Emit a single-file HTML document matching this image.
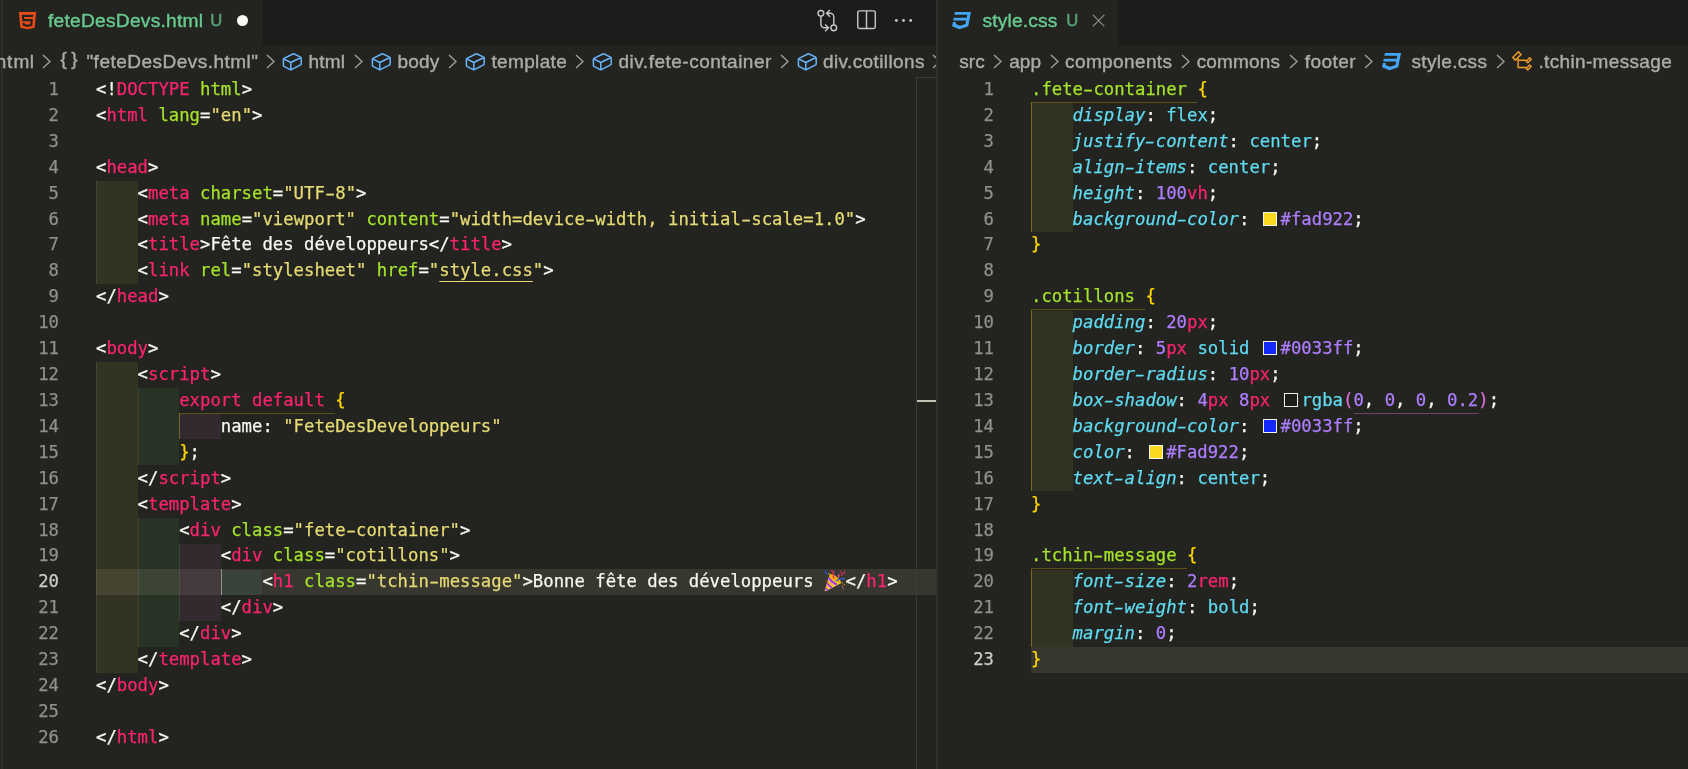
<!DOCTYPE html>
<html lang="fr">
<head>
<meta charset="UTF-8">
<title>feteDesDevs.html — style.css</title>
<style>
html,body{margin:0;padding:0;}
body{width:1688px;height:769px;overflow:hidden;background:#23241f;position:relative;font-family:"Liberation Sans",sans-serif;color:#f8f8f2;}
#root{position:absolute;left:0;top:0;width:1688px;height:769px;will-change:transform;}
.abs{position:absolute;}
#stripe{left:0;top:0;width:3.1px;height:769px;background:#2e2f2a;border-left:1.1px solid #22231f;box-sizing:border-box;}
.tabbar{top:0;height:45.8px;background:#1c1d1a;}
.tab{top:0;height:45.8px;background:#23241f;}
.tl{position:absolute;white-space:pre;font-size:19.2px;line-height:24px;color:#69ca90;-webkit-text-stroke:.4px #69ca90;}
.bc{position:absolute;white-space:pre;font-size:19px;line-height:24px;color:#ababa7;top:49.6px;-webkit-text-stroke:.4px #ababa7;}
.chev{position:absolute;top:54.2px;width:9px;height:15px;}
.cube{position:absolute;top:51.5px;width:21px;height:20px;}
.ln{-webkit-text-stroke:.25px;position:absolute;width:60px;text-align:right;font:17.28px/25.92px "DejaVu Sans Mono","Liberation Mono",monospace;color:#90908a;}
.ln.act{color:#cfcfc8;}
.cl{letter-spacing:.004px;-webkit-text-stroke:.25px;position:absolute;white-space:pre;font:17.28px/25.92px "DejaVu Sans Mono","Liberation Mono",monospace;color:#f8f8f2;height:25.92px;}
.ib{position:absolute;width:41.6px;height:25.92px;}
.w{color:#f8f8f2}.p{color:#fb2370}.g{color:#a6e42c}.y{color:#e6db74}.n{color:#ae7eff}
.k{color:#5fdbf2}.c{color:#5fdbf2;font-style:italic}.b1{color:#ffd700}.b2{color:#da70d6}
.hy{display:inline-block;transform:scaleX(1.62);}
.ul{text-decoration:underline;text-underline-offset:5.1px;text-decoration-thickness:1.3px;text-decoration-skip-ink:none}
.ulg{box-shadow:0 4.6px 0 -3.2px rgba(218,112,214,.55);}
.sw{display:inline-block;box-sizing:border-box;width:13.82px;height:13.82px;margin:0 3.46px 0 3.46px;border:1.6px solid #f2f2ee;vertical-align:-1.2px;}
.swd{border-color:#eeeeee;}
.emo{display:inline-block;width:21.5px;height:1px;}
.emsvg{position:absolute;left:561.3px;top:.45px;}
.emt{position:absolute;left:565px;top:0;font-size:1px;line-height:1px;opacity:0;}
.hl{position:absolute;height:25.92px;background:#37362f;}
.gl{position:absolute;background:rgba(255,215,0,.26);}
.ig{position:absolute;width:1.3px;background:rgba(255,255,255,.09);}
</style>
</head>
<body>
<div id="root">
<!-- ===== left group chrome ===== -->
<div class="abs tabbar" style="left:0;width:936.5px"></div>
<div class="abs tab" style="left:2.4px;width:260.6px"></div>
<div class="abs tabbar" style="left:937.6px;width:751px"></div>
<div class="abs tab" style="left:937.6px;width:180.4px"></div>
<div class="abs" id="stripe"></div>
<div class="abs" style="left:936.4px;top:0;width:1.4px;height:769px;background:#2f302b"></div>

<!-- tab 1 -->
<svg class="abs" style="left:16px;top:8.6px" width="23.04" height="23.04" viewBox="0 0 32 32"><path fill="#e94b19" d="m4 4 2 22 10 2 10-2 2-22Zm19.720 7H11.280l.290 3h11.860l-.802 9.335L15.990 25l-6.635-1.646L8.930 19h3.020l.190 2 3.860.770 3.840-.770.290-4H8.840L8 8h16Z"/></svg>
<div class="tl" style="left:48px;top:9.2px;letter-spacing:.24px">feteDesDevs.html</div>
<div class="tl" style="left:210.2px;top:9.1px;opacity:.75;font-size:16.6px;-webkit-text-stroke-width:.55px">U</div>
<div class="abs" style="left:236.7px;top:14.7px;width:11.5px;height:11.5px;border-radius:50%;background:#f8f8f2"></div>

<!-- left actions -->
<svg class="abs" style="left:816.3px;top:9.3px" width="23.04" height="23.04" viewBox="0 0 16 16" fill="none" stroke="#c5c5c5" stroke-width="1"><circle cx="3.400" cy="3" r="2"/><circle cx="12.350" cy="13.050" r="2"/><path d="M3.400 5v5.550a2.500 2.500 0 0 0 2.500 2.500h2.500M6.300 10.700l2.400 2.350-2.400 2.350"/><path d="M12.350 11.050V5.500a2.500 2.500 0 0 0-2.500-2.500H7.600M9.700.650 7.300 3l2.400 2.350"/></svg>
<svg class="abs" style="left:854.7px;top:7.9px" width="23.04" height="23.04" viewBox="0 0 16 16" fill="none" stroke="#c5c5c5" stroke-width="1"><rect x="1.900" y="2" width="12.200" height="12.200" rx="1.200"/><path d="M8 2v12.200"/></svg>
<svg class="abs" style="left:891.5px;top:9.1px" width="23.04" height="23.04" viewBox="0 0 16 16" fill="#c5c5c5"><circle cx="3" cy="8" r="1"/><circle cx="8" cy="8" r="1"/><circle cx="13" cy="8" r="1"/></svg>

<!-- tab 2 -->
<svg class="abs" style="left:949.8px;top:8.6px" width="23.04" height="23.04" viewBox="0 0 32 32"><path fill="#42a5f5" d="m29.180 4-3.570 18.360-.330 1.640-4.740 1.570-3.280 1.090L13.210 28 2.870 24.050 4.050 18h4.200l-.440 2.850 6.340 2.420.780-.260 6.520-2.160.170-.830.790-4.020H4.440l.740-3.760.050-.240h17.960l.780-4H6l.780-4z"/></svg>
<div class="tl" style="left:982.4px;top:9.2px;letter-spacing:.18px">style.css</div>
<div class="tl" style="left:1066.2px;top:9.1px;opacity:.75;font-size:16.6px;-webkit-text-stroke-width:.55px">U</div>
<svg class="abs" style="left:1091.5px;top:14.2px" width="13.2" height="13.2" viewBox="0 0 12 12" fill="none" stroke="#8f908a" stroke-width="1.100"><path d="M.8.800l10.400 10.400M11.200.800.800 11.200"/></svg>

<!-- breadcrumbs left -->
<div class="bc" style="left:-4.2px;letter-spacing:.5px">h<span style="letter-spacing:1.2px">t</span>ml</div>
<svg class="chev" style="left:41.8px" viewBox="0 0 9 15" fill="none" stroke="#a3a39f" stroke-width="1.300"><path d="M1 1l7 6.500-7 6.500"/></svg>
<div class="bc" style="left:60.6px;top:47.4px;letter-spacing:4.4px;font-size:18.72px">{}</div>
<div class="bc" style="left:86.4px;letter-spacing:0.484px">&quot;feteDesDevs.html&quot;</div>
<svg class="chev" style="left:265.7px" viewBox="0 0 9 15" fill="none" stroke="#a3a39f" stroke-width="1.300"><path d="M1 1l7 6.500-7 6.500"/></svg>
<svg class="abs" style="left:281.00px;top:52px" width="23" height="20" viewBox="0 0 23 20" fill="none" stroke="#69b4fb" stroke-width="1.500" stroke-linejoin="round" stroke-linecap="round"><path d="M2.400 7.200Q2.400 6.600 3 6.300L11.800 2Q12.500 1.700 13.200 2L19.600 5.100Q20.200 5.400 20.200 6V11.900Q20.200 12.500 19.600 12.800L10.400 17.600Q9.800 17.900 9.200 17.600L3 14.300Q2.400 14 2.400 13.400ZM2.700 6.800L9.800 10.500L19.900 5.500M9.800 10.500V17.800"/></svg>
<div class="bc" style="left:308.4px;letter-spacing:0.258px">html</div>
<svg class="chev" style="left:354.0px" viewBox="0 0 9 15" fill="none" stroke="#a3a39f" stroke-width="1.300"><path d="M1 1l7 6.500-7 6.500"/></svg>
<svg class="abs" style="left:370.05px;top:52px" width="23" height="20" viewBox="0 0 23 20" fill="none" stroke="#69b4fb" stroke-width="1.500" stroke-linejoin="round" stroke-linecap="round"><path d="M2.400 7.200Q2.400 6.600 3 6.300L11.800 2Q12.500 1.700 13.200 2L19.600 5.100Q20.200 5.400 20.200 6V11.900Q20.200 12.500 19.600 12.800L10.400 17.600Q9.800 17.900 9.200 17.600L3 14.300Q2.400 14 2.400 13.400ZM2.700 6.800L9.800 10.500L19.900 5.500M9.800 10.500V17.800"/></svg>
<div class="bc" style="left:397.4px;letter-spacing:0.208px">body</div>
<svg class="chev" style="left:448.3px" viewBox="0 0 9 15" fill="none" stroke="#a3a39f" stroke-width="1.300"><path d="M1 1l7 6.500-7 6.500"/></svg>
<svg class="abs" style="left:464.15px;top:52px" width="23" height="20" viewBox="0 0 23 20" fill="none" stroke="#69b4fb" stroke-width="1.500" stroke-linejoin="round" stroke-linecap="round"><path d="M2.400 7.200Q2.400 6.600 3 6.300L11.800 2Q12.500 1.700 13.200 2L19.600 5.100Q20.200 5.400 20.200 6V11.900Q20.200 12.500 19.600 12.800L10.400 17.600Q9.800 17.900 9.200 17.600L3 14.300Q2.400 14 2.400 13.400ZM2.700 6.800L9.800 10.500L19.900 5.500M9.800 10.500V17.800"/></svg>
<div class="bc" style="left:491.4px;letter-spacing:0.360px">template</div>
<svg class="chev" style="left:575.2px" viewBox="0 0 9 15" fill="none" stroke="#a3a39f" stroke-width="1.300"><path d="M1 1l7 6.500-7 6.500"/></svg>
<svg class="abs" style="left:591.05px;top:52px" width="23" height="20" viewBox="0 0 23 20" fill="none" stroke="#69b4fb" stroke-width="1.500" stroke-linejoin="round" stroke-linecap="round"><path d="M2.400 7.200Q2.400 6.600 3 6.300L11.800 2Q12.500 1.700 13.200 2L19.600 5.100Q20.200 5.400 20.200 6V11.900Q20.200 12.500 19.600 12.800L10.400 17.600Q9.800 17.900 9.200 17.600L3 14.300Q2.400 14 2.400 13.400ZM2.700 6.800L9.800 10.500L19.900 5.500M9.800 10.500V17.800"/></svg>
<div class="bc" style="left:618.5px;letter-spacing:0.499px">div.fete-container</div>
<svg class="chev" style="left:779.9px" viewBox="0 0 9 15" fill="none" stroke="#a3a39f" stroke-width="1.300"><path d="M1 1l7 6.500-7 6.500"/></svg>
<svg class="abs" style="left:795.55px;top:52px" width="23" height="20" viewBox="0 0 23 20" fill="none" stroke="#69b4fb" stroke-width="1.500" stroke-linejoin="round" stroke-linecap="round"><path d="M2.400 7.200Q2.400 6.600 3 6.300L11.800 2Q12.500 1.700 13.200 2L19.600 5.100Q20.200 5.400 20.200 6V11.900Q20.200 12.500 19.600 12.800L10.400 17.600Q9.800 17.900 9.200 17.600L3 14.300Q2.400 14 2.400 13.400ZM2.700 6.800L9.800 10.500L19.900 5.500M9.800 10.500V17.800"/></svg>
<div class="bc" style="left:823.0px;letter-spacing:0.383px">div.cotillons</div>
<svg class="chev" style="left:932.3px" viewBox="0 0 9 15" fill="none" stroke="#a3a39f" stroke-width="1.300"><path d="M1 1l7 6.500-7 6.500"/></svg>
<div class="abs" style="left:936.4px;top:46px;width:1.3px;height:31.5px;background:#2f302b"></div>
<div class="abs" style="left:937.6px;top:46px;width:12px;height:31px;background:#23241f"></div>
<!-- breadcrumbs right -->
<div class="bc" style="left:959.3px;letter-spacing:0.029px">src</div>
<svg class="chev" style="left:993.0px" viewBox="0 0 9 15" fill="none" stroke="#a3a39f" stroke-width="1.300"><path d="M1 1l7 6.500-7 6.500"/></svg>
<div class="bc" style="left:1009.2px;letter-spacing:0.104px">app</div>
<svg class="chev" style="left:1049.5px" viewBox="0 0 9 15" fill="none" stroke="#a3a39f" stroke-width="1.300"><path d="M1 1l7 6.500-7 6.500"/></svg>
<div class="bc" style="left:1065.1px;letter-spacing:0.379px">components</div>
<svg class="chev" style="left:1180.8px" viewBox="0 0 9 15" fill="none" stroke="#a3a39f" stroke-width="1.300"><path d="M1 1l7 6.500-7 6.500"/></svg>
<div class="bc" style="left:1196.7px;letter-spacing:0.172px">commons</div>
<svg class="chev" style="left:1289.0px" viewBox="0 0 9 15" fill="none" stroke="#a3a39f" stroke-width="1.300"><path d="M1 1l7 6.500-7 6.500"/></svg>
<div class="bc" style="left:1304.7px;letter-spacing:0.476px">footer</div>
<svg class="chev" style="left:1364.3px" viewBox="0 0 9 15" fill="none" stroke="#a3a39f" stroke-width="1.300"><path d="M1 1l7 6.500-7 6.500"/></svg>
<svg class="abs" style="left:1379.9px;top:49.7px" width="23.04" height="23.04" viewBox="0 0 32 32"><path fill="#42a5f5" d="m29.180 4-3.570 18.360-.330 1.640-4.740 1.570-3.280 1.090L13.210 28 2.870 24.050 4.050 18h4.200l-.440 2.850 6.340 2.420.780-.260 6.520-2.160.170-.830.790-4.020H4.440l.740-3.760.050-.240h17.960l.780-4H6l.780-4z"/></svg>
<div class="bc" style="left:1411.5px;letter-spacing:0.323px">style.css</div>
<svg class="chev" style="left:1495.5px" viewBox="0 0 9 15" fill="none" stroke="#a3a39f" stroke-width="1.300"><path d="M1 1l7 6.500-7 6.500"/></svg>
<svg class="abs" style="left:1505.00px;top:46px" width="36" height="30" viewBox="0 0 36 30" fill="none" stroke="#ee9d28" stroke-width="1.450" stroke-linejoin="round"><rect x="-4" y="-1.850" width="8" height="3.700" transform="translate(11.900 10) rotate(-45)"/><rect x="-2.400" y="-1.100" width="4.800" height="2.200" transform="translate(23.670 14.300) rotate(-45)"/><rect x="-2.400" y="-1.100" width="4.800" height="2.200" transform="translate(23.670 21.450) rotate(-45)"/><path d="M13.100 12.600V21.450H21.200M13.100 14.300H21.200"/></svg>
<div class="bc" style="left:1538.4px;letter-spacing:0.348px">.tchin-message</div>

<!-- ===== editors ===== -->
<div class="hl" style="left:96px;top:568.98px;width:840.4px"></div>
<div class="hl" style="left:1031px;top:646.74px;width:657px"></div>
<div class="ln" style="top:76.90px;left:-1.00px">1</div>
<div class="cl" style="top:76.90px;left:96.00px"><span class="w">&lt;!</span><span class="p">DOCTYPE</span> <span class="g">html</span><span class="w">&gt;</span></div>
<div class="ln" style="top:102.82px;left:-1.00px">2</div>
<div class="cl" style="top:102.82px;left:96.00px"><span class="w">&lt;</span><span class="p">html</span> <span class="g">lang</span><span class="w">=</span><span class="y">"en"</span><span class="w">&gt;</span></div>
<div class="ln" style="top:128.74px;left:-1.00px">3</div>
<div class="ln" style="top:154.66px;left:-1.00px">4</div>
<div class="cl" style="top:154.66px;left:96.00px"><span class="w">&lt;</span><span class="p">head</span><span class="w">&gt;</span></div>
<div class="ln" style="top:180.58px;left:-1.00px">5</div>
<div class="ib" style="top:180.98px;left:96.00px;height:25.12px;background:rgba(255,255,64,0.07)"></div>
<div class="ig" style="top:180.98px;left:96.00px;height:25.12px"></div>
<div class="cl" style="top:180.58px;left:137.60px"><span class="w">&lt;</span><span class="p">meta</span> <span class="g">charset</span><span class="w">=</span><span class="y">"UTF<span class="hy">-</span>8"</span><span class="w">&gt;</span></div>
<div class="ln" style="top:206.50px;left:-1.00px">6</div>
<div class="ib" style="top:206.10px;left:96.00px;height:25.92px;background:rgba(255,255,64,0.07)"></div>
<div class="ig" style="top:206.10px;left:96.00px;height:25.92px"></div>
<div class="cl" style="top:206.50px;left:137.60px"><span class="w">&lt;</span><span class="p">meta</span> <span class="g">name</span><span class="w">=</span><span class="y">"viewport"</span> <span class="g">content</span><span class="w">=</span><span class="y">"width=device<span class="hy">-</span>width, initial<span class="hy">-</span>scale=1.0"</span><span class="w">&gt;</span></div>
<div class="ln" style="top:232.42px;left:-1.00px">7</div>
<div class="ib" style="top:232.02px;left:96.00px;height:25.92px;background:rgba(255,255,64,0.07)"></div>
<div class="ig" style="top:232.02px;left:96.00px;height:25.92px"></div>
<div class="cl" style="top:232.42px;left:137.60px"><span class="w">&lt;</span><span class="p">title</span><span class="w">&gt;</span><span class="w">Fête des développeurs</span><span class="w">&lt;/</span><span class="p">title</span><span class="w">&gt;</span></div>
<div class="ln" style="top:258.34px;left:-1.00px">8</div>
<div class="ib" style="top:257.94px;left:96.00px;height:25.92px;background:rgba(255,255,64,0.07)"></div>
<div class="ig" style="top:257.94px;left:96.00px;height:25.92px"></div>
<div class="cl" style="top:258.34px;left:137.60px"><span class="w">&lt;</span><span class="p">link</span> <span class="g">rel</span><span class="w">=</span><span class="y">"stylesheet"</span> <span class="g">href</span><span class="w">=</span><span class="y">"</span><span class="y ul">style.css</span><span class="y">"</span><span class="w">&gt;</span></div>
<div class="ln" style="top:284.26px;left:-1.00px">9</div>
<div class="cl" style="top:284.26px;left:96.00px"><span class="w">&lt;/</span><span class="p">head</span><span class="w">&gt;</span></div>
<div class="ln" style="top:310.18px;left:-1.00px">10</div>
<div class="ln" style="top:336.10px;left:-1.00px">11</div>
<div class="cl" style="top:336.10px;left:96.00px"><span class="w">&lt;</span><span class="p">body</span><span class="w">&gt;</span></div>
<div class="ln" style="top:362.02px;left:-1.00px">12</div>
<div class="ib" style="top:362.42px;left:96.00px;height:25.12px;background:rgba(255,255,64,0.07)"></div>
<div class="ig" style="top:362.42px;left:96.00px;height:25.12px"></div>
<div class="cl" style="top:362.02px;left:137.60px"><span class="w">&lt;</span><span class="p">script</span><span class="w">&gt;</span></div>
<div class="ln" style="top:387.94px;left:-1.00px">13</div>
<div class="ib" style="top:387.54px;left:96.00px;height:25.92px;background:rgba(255,255,64,0.07)"></div>
<div class="ig" style="top:387.54px;left:96.00px;height:25.92px"></div>
<div class="ib" style="top:388.34px;left:137.60px;height:25.12px;background:rgba(127,255,127,0.07)"></div>
<div class="ig" style="top:388.34px;left:137.60px;height:25.12px"></div>
<div class="cl" style="top:387.94px;left:179.20px"><span class="p">export</span> <span class="p">default</span> <span class="b1">{</span></div>
<div class="ln" style="top:413.86px;left:-1.00px">14</div>
<div class="ib" style="top:413.46px;left:96.00px;height:25.92px;background:rgba(255,255,64,0.07)"></div>
<div class="ig" style="top:413.46px;left:96.00px;height:25.92px"></div>
<div class="ib" style="top:413.46px;left:137.60px;height:25.92px;background:rgba(127,255,127,0.07)"></div>
<div class="ig" style="top:413.46px;left:137.60px;height:25.92px"></div>
<div class="ib" style="top:414.26px;left:179.20px;height:25.12px;background:rgba(255,127,255,0.07)"></div>
<div class="ig" style="top:414.26px;left:179.20px;height:25.12px"></div>
<div class="cl" style="top:413.86px;left:220.80px"><span class="w">name: </span><span class="y">"FeteDesDeveloppeurs"</span></div>
<div class="ln" style="top:439.78px;left:-1.00px">15</div>
<div class="ib" style="top:439.38px;left:96.00px;height:25.92px;background:rgba(255,255,64,0.07)"></div>
<div class="ig" style="top:439.38px;left:96.00px;height:25.92px"></div>
<div class="ib" style="top:439.38px;left:137.60px;height:25.92px;background:rgba(127,255,127,0.07)"></div>
<div class="ig" style="top:439.38px;left:137.60px;height:25.92px"></div>
<div class="cl" style="top:439.78px;left:179.20px"><span class="b1">}</span><span class="w">;</span></div>
<div class="ln" style="top:465.70px;left:-1.00px">16</div>
<div class="ib" style="top:465.30px;left:96.00px;height:25.92px;background:rgba(255,255,64,0.07)"></div>
<div class="ig" style="top:465.30px;left:96.00px;height:25.92px"></div>
<div class="cl" style="top:465.70px;left:137.60px"><span class="w">&lt;/</span><span class="p">script</span><span class="w">&gt;</span></div>
<div class="ln" style="top:491.62px;left:-1.00px">17</div>
<div class="ib" style="top:491.22px;left:96.00px;height:25.92px;background:rgba(255,255,64,0.07)"></div>
<div class="ig" style="top:491.22px;left:96.00px;height:25.92px"></div>
<div class="cl" style="top:491.62px;left:137.60px"><span class="w">&lt;</span><span class="p">template</span><span class="w">&gt;</span></div>
<div class="ln" style="top:517.54px;left:-1.00px">18</div>
<div class="ib" style="top:517.14px;left:96.00px;height:25.92px;background:rgba(255,255,64,0.07)"></div>
<div class="ig" style="top:517.14px;left:96.00px;height:25.92px"></div>
<div class="ib" style="top:517.94px;left:137.60px;height:25.12px;background:rgba(127,255,127,0.07)"></div>
<div class="ig" style="top:517.94px;left:137.60px;height:25.12px"></div>
<div class="cl" style="top:517.54px;left:179.20px"><span class="w">&lt;</span><span class="p">div</span> <span class="g">class</span><span class="w">=</span><span class="y">"fete<span class="hy">-</span>container"</span><span class="w">&gt;</span></div>
<div class="ln" style="top:543.46px;left:-1.00px">19</div>
<div class="ib" style="top:543.06px;left:96.00px;height:25.92px;background:rgba(255,255,64,0.07)"></div>
<div class="ig" style="top:543.06px;left:96.00px;height:25.92px"></div>
<div class="ib" style="top:543.06px;left:137.60px;height:25.92px;background:rgba(127,255,127,0.07)"></div>
<div class="ig" style="top:543.06px;left:137.60px;height:25.92px"></div>
<div class="ib" style="top:543.86px;left:179.20px;height:25.12px;background:rgba(255,127,255,0.07)"></div>
<div class="ig" style="top:543.86px;left:179.20px;height:25.12px"></div>
<div class="cl" style="top:543.46px;left:220.80px"><span class="w">&lt;</span><span class="p">div</span> <span class="g">class</span><span class="w">=</span><span class="y">"cotillons"</span><span class="w">&gt;</span></div>
<div class="ln act" style="top:569.38px;left:-1.00px">20</div>
<div class="ib" style="top:568.98px;left:96.00px;height:25.92px;background:rgba(255,255,64,0.07)"></div>
<div class="ig" style="top:568.98px;left:96.00px;height:25.92px"></div>
<div class="ib" style="top:568.98px;left:137.60px;height:25.92px;background:rgba(127,255,127,0.07)"></div>
<div class="ig" style="top:568.98px;left:137.60px;height:25.92px"></div>
<div class="ib" style="top:568.98px;left:179.20px;height:25.92px;background:rgba(255,127,255,0.07)"></div>
<div class="ig" style="top:568.98px;left:179.20px;height:25.92px"></div>
<div class="ib" style="top:569.78px;left:220.80px;height:25.12px;background:rgba(79,236,236,0.07)"></div>
<div class="ig" style="top:569.78px;left:220.80px;height:25.12px"></div>
<div class="cl" style="top:569.38px;left:262.40px"><span class="w">&lt;</span><span class="p">h1</span> <span class="g">class</span><span class="w">=</span><span class="y">"tchin<span class="hy">-</span>message"</span><span class="w">&gt;</span><span class="w">Bonne fête des développeurs </span><span class="emo"><svg class="emsvg" width="21.5" height="21.5" viewBox="0 0 21.5 21.5"><defs><linearGradient id="cg" x1="0" y1="0" x2="1" y2="1"><stop offset="0" stop-color="#e79a14"/><stop offset=".45" stop-color="#f8bd10"/><stop offset="1" stop-color="#fff23a"/></linearGradient><clipPath id="cc"><path d="M.700 20.600Q.500 21.600 1.600 21.300L16.900 13.300Q17.200 10.600 13 7T5.700 4.200Z"/></clipPath></defs><path d="M.700 20.600Q.500 21.600 1.600 21.300L16.900 13.300Q17.200 10.600 13 7T5.700 4.200Z" fill="url(#cg)"/><g clip-path="url(#cc)" fill="none" stroke-linecap="butt"><path d="M3.900 7.800Q7 12 12.500 15.200" stroke="#e78be8" stroke-width="2.600"/><path d="M4.300 7.400Q7.300 11.500 12.800 14.600" stroke="#9a2fd8" stroke-width="1.700"/><path d="M2.400 13.200Q4.500 16 8 18.300" stroke="#e78be8" stroke-width="2.300"/><path d="M2.800 12.900Q4.800 15.600 8.300 17.800" stroke="#9a2fd8" stroke-width="1.500"/><path d="M.800 18.300Q2 19.600 3.800 20.800" stroke="#e78be8" stroke-width="2"/><path d="M1.100 18Q2.300 19.300 4.100 20.400" stroke="#9a2fd8" stroke-width="1.300"/></g><ellipse cx="11.200" cy="8.600" rx="7" ry="1.900" transform="rotate(38 11.200 8.600)" fill="#f0a818"/><path d="M1.500.600Q.300 1.800 1.600 2.600T2.800 4.400" fill="none" stroke="#2a50c8" stroke-width="1.300" stroke-linecap="round"/><path d="M7.800.500Q9.800 2.300 9.500 4.300T9.800 7.800" fill="none" stroke="#e8304c" stroke-width="1.350" stroke-linecap="round"/><path d="M16.700 1.200Q17 3 18.200 3.500M20.600.800Q21.300 3 19.200 3.600T17.800 5.600" fill="none" stroke="#d42a55" stroke-width="1.150" stroke-linecap="round"/><path d="M12.600 10.700Q15 8.600 21 8.600" fill="none" stroke="#2a66dc" stroke-width="1.400" stroke-linecap="round"/><ellipse cx="14.700" cy="5.800" rx=".800" ry="1.700" fill="#ea5a90"/><circle cx="4.800" cy="3.700" r=".650" fill="#e6c820"/><circle cx="10.600" cy="1.900" r=".700" fill="#2a58c8"/><circle cx="11.700" cy="4.800" r=".650" fill="#2a58c8"/><circle cx="18.300" cy="12.900" r=".700" fill="#c6be30"/><circle cx="20.300" cy="14.400" r=".750" fill="#e08a22"/><circle cx="18.500" cy="16.400" r=".700" fill="#e08a22"/><circle cx="14.800" cy="16.600" r=".650" fill="#2a58c0"/><circle cx="19.100" cy="18.700" r=".750" fill="#da5aa2"/><circle cx="2.100" cy="11" r=".650" fill="#c42a44"/></svg><span class="emt">🎉</span></span><span class="w">&lt;/</span><span class="p">h1</span><span class="w">&gt;</span></div>
<div class="ln" style="top:595.30px;left:-1.00px">21</div>
<div class="ib" style="top:594.90px;left:96.00px;height:25.92px;background:rgba(255,255,64,0.07)"></div>
<div class="ig" style="top:594.90px;left:96.00px;height:25.92px"></div>
<div class="ib" style="top:594.90px;left:137.60px;height:25.92px;background:rgba(127,255,127,0.07)"></div>
<div class="ig" style="top:594.90px;left:137.60px;height:25.92px"></div>
<div class="ib" style="top:594.90px;left:179.20px;height:25.92px;background:rgba(255,127,255,0.07)"></div>
<div class="ig" style="top:594.90px;left:179.20px;height:25.92px"></div>
<div class="cl" style="top:595.30px;left:220.80px"><span class="w">&lt;/</span><span class="p">div</span><span class="w">&gt;</span></div>
<div class="ln" style="top:621.22px;left:-1.00px">22</div>
<div class="ib" style="top:620.82px;left:96.00px;height:25.92px;background:rgba(255,255,64,0.07)"></div>
<div class="ig" style="top:620.82px;left:96.00px;height:25.92px"></div>
<div class="ib" style="top:620.82px;left:137.60px;height:25.92px;background:rgba(127,255,127,0.07)"></div>
<div class="ig" style="top:620.82px;left:137.60px;height:25.92px"></div>
<div class="cl" style="top:621.22px;left:179.20px"><span class="w">&lt;/</span><span class="p">div</span><span class="w">&gt;</span></div>
<div class="ln" style="top:647.14px;left:-1.00px">23</div>
<div class="ib" style="top:646.74px;left:96.00px;height:25.92px;background:rgba(255,255,64,0.07)"></div>
<div class="ig" style="top:646.74px;left:96.00px;height:25.92px"></div>
<div class="cl" style="top:647.14px;left:137.60px"><span class="w">&lt;/</span><span class="p">template</span><span class="w">&gt;</span></div>
<div class="ln" style="top:673.06px;left:-1.00px">24</div>
<div class="cl" style="top:673.06px;left:96.00px"><span class="w">&lt;/</span><span class="p">body</span><span class="w">&gt;</span></div>
<div class="ln" style="top:698.98px;left:-1.00px">25</div>
<div class="ln" style="top:724.90px;left:-1.00px">26</div>
<div class="cl" style="top:724.90px;left:96.00px"><span class="w">&lt;/</span><span class="p">html</span><span class="w">&gt;</span></div>
<div class="ln" style="top:76.90px;left:934.00px">1</div>
<div class="cl" style="top:76.90px;left:1031.00px"><span class="g">.fete<span class="hy">-</span>container</span> <span class="b1">{</span></div>
<div class="ln" style="top:102.82px;left:934.00px">2</div>
<div class="ib" style="top:103.22px;left:1031.00px;height:25.12px;background:rgba(255,255,64,0.07)"></div>
<div class="ig" style="top:103.22px;left:1031.00px;height:25.12px"></div>
<div class="cl" style="top:102.82px;left:1072.60px"><span class="c">display</span><span class="w">:</span> <span class="k">flex</span><span class="w">;</span></div>
<div class="ln" style="top:128.74px;left:934.00px">3</div>
<div class="ib" style="top:128.34px;left:1031.00px;height:25.92px;background:rgba(255,255,64,0.07)"></div>
<div class="ig" style="top:128.34px;left:1031.00px;height:25.92px"></div>
<div class="cl" style="top:128.74px;left:1072.60px"><span class="c">justify<span class="hy">-</span>content</span><span class="w">:</span> <span class="k">center</span><span class="w">;</span></div>
<div class="ln" style="top:154.66px;left:934.00px">4</div>
<div class="ib" style="top:154.26px;left:1031.00px;height:25.92px;background:rgba(255,255,64,0.07)"></div>
<div class="ig" style="top:154.26px;left:1031.00px;height:25.92px"></div>
<div class="cl" style="top:154.66px;left:1072.60px"><span class="c">align<span class="hy">-</span>items</span><span class="w">:</span> <span class="k">center</span><span class="w">;</span></div>
<div class="ln" style="top:180.58px;left:934.00px">5</div>
<div class="ib" style="top:180.18px;left:1031.00px;height:25.92px;background:rgba(255,255,64,0.07)"></div>
<div class="ig" style="top:180.18px;left:1031.00px;height:25.92px"></div>
<div class="cl" style="top:180.58px;left:1072.60px"><span class="c">height</span><span class="w">:</span> <span class="n">100</span><span class="p">vh</span><span class="w">;</span></div>
<div class="ln" style="top:206.50px;left:934.00px">6</div>
<div class="ib" style="top:206.10px;left:1031.00px;height:25.92px;background:rgba(255,255,64,0.07)"></div>
<div class="ig" style="top:206.10px;left:1031.00px;height:25.92px"></div>
<div class="cl" style="top:206.50px;left:1072.60px"><span class="c">background<span class="hy">-</span>color</span><span class="w">:</span> <span class="sw " style="background:#fad922"></span><span class="n">#fad922</span><span class="w">;</span></div>
<div class="ln" style="top:232.42px;left:934.00px">7</div>
<div class="cl" style="top:232.42px;left:1031.00px"><span class="b1">}</span></div>
<div class="ln" style="top:258.34px;left:934.00px">8</div>
<div class="ln" style="top:284.26px;left:934.00px">9</div>
<div class="cl" style="top:284.26px;left:1031.00px"><span class="g">.cotillons</span> <span class="b1">{</span></div>
<div class="ln" style="top:310.18px;left:934.00px">10</div>
<div class="ib" style="top:310.58px;left:1031.00px;height:25.12px;background:rgba(255,255,64,0.07)"></div>
<div class="ig" style="top:310.58px;left:1031.00px;height:25.12px"></div>
<div class="cl" style="top:310.18px;left:1072.60px"><span class="c">padding</span><span class="w">:</span> <span class="n">20</span><span class="p">px</span><span class="w">;</span></div>
<div class="ln" style="top:336.10px;left:934.00px">11</div>
<div class="ib" style="top:335.70px;left:1031.00px;height:25.92px;background:rgba(255,255,64,0.07)"></div>
<div class="ig" style="top:335.70px;left:1031.00px;height:25.92px"></div>
<div class="cl" style="top:336.10px;left:1072.60px"><span class="c">border</span><span class="w">:</span> <span class="n">5</span><span class="p">px</span> <span class="k">solid</span> <span class="sw " style="background:#1629fb"></span><span class="n">#0033ff</span><span class="w">;</span></div>
<div class="ln" style="top:362.02px;left:934.00px">12</div>
<div class="ib" style="top:361.62px;left:1031.00px;height:25.92px;background:rgba(255,255,64,0.07)"></div>
<div class="ig" style="top:361.62px;left:1031.00px;height:25.92px"></div>
<div class="cl" style="top:362.02px;left:1072.60px"><span class="c">border<span class="hy">-</span>radius</span><span class="w">:</span> <span class="n">10</span><span class="p">px</span><span class="w">;</span></div>
<div class="ln" style="top:387.94px;left:934.00px">13</div>
<div class="ib" style="top:387.54px;left:1031.00px;height:25.92px;background:rgba(255,255,64,0.07)"></div>
<div class="ig" style="top:387.54px;left:1031.00px;height:25.92px"></div>
<div class="cl" style="top:387.94px;left:1072.60px"><span class="c">box<span class="hy">-</span>shadow</span><span class="w">:</span> <span class="n">4</span><span class="p">px</span> <span class="n">8</span><span class="p">px</span> <span class="sw swd" style="background:rgba(0,0,0,0.2)"></span><span class="k">rgba</span><span class="b2">(</span><span class="n">0</span><span class="w">,</span> <span class="n">0</span><span class="w">,</span> <span class="n">0</span><span class="w">,</span> <span class="n">0.2</span><span class="b2">)</span><span class="w">;</span></div>
<div class="ln" style="top:413.86px;left:934.00px">14</div>
<div class="ib" style="top:413.46px;left:1031.00px;height:25.92px;background:rgba(255,255,64,0.07)"></div>
<div class="ig" style="top:413.46px;left:1031.00px;height:25.92px"></div>
<div class="cl" style="top:413.86px;left:1072.60px"><span class="c">background<span class="hy">-</span>color</span><span class="w">:</span> <span class="sw " style="background:#1629fb"></span><span class="n">#0033ff</span><span class="w">;</span></div>
<div class="ln" style="top:439.78px;left:934.00px">15</div>
<div class="ib" style="top:439.38px;left:1031.00px;height:25.92px;background:rgba(255,255,64,0.07)"></div>
<div class="ig" style="top:439.38px;left:1031.00px;height:25.92px"></div>
<div class="cl" style="top:439.78px;left:1072.60px"><span class="c">color</span><span class="w">:</span> <span class="sw " style="background:#Fad922"></span><span class="n">#Fad922</span><span class="w">;</span></div>
<div class="ln" style="top:465.70px;left:934.00px">16</div>
<div class="ib" style="top:465.30px;left:1031.00px;height:25.92px;background:rgba(255,255,64,0.07)"></div>
<div class="ig" style="top:465.30px;left:1031.00px;height:25.92px"></div>
<div class="cl" style="top:465.70px;left:1072.60px"><span class="c">text<span class="hy">-</span>align</span><span class="w">:</span> <span class="k">center</span><span class="w">;</span></div>
<div class="ln" style="top:491.62px;left:934.00px">17</div>
<div class="cl" style="top:491.62px;left:1031.00px"><span class="b1">}</span></div>
<div class="ln" style="top:517.54px;left:934.00px">18</div>
<div class="ln" style="top:543.46px;left:934.00px">19</div>
<div class="cl" style="top:543.46px;left:1031.00px"><span class="g">.tchin<span class="hy">-</span>message</span> <span class="b1">{</span></div>
<div class="ln" style="top:569.38px;left:934.00px">20</div>
<div class="ib" style="top:569.78px;left:1031.00px;height:25.12px;background:rgba(255,255,64,0.07)"></div>
<div class="ig" style="top:569.78px;left:1031.00px;height:25.12px"></div>
<div class="cl" style="top:569.38px;left:1072.60px"><span class="c">font<span class="hy">-</span>size</span><span class="w">:</span> <span class="n">2</span><span class="p">rem</span><span class="w">;</span></div>
<div class="ln" style="top:595.30px;left:934.00px">21</div>
<div class="ib" style="top:594.90px;left:1031.00px;height:25.92px;background:rgba(255,255,64,0.07)"></div>
<div class="ig" style="top:594.90px;left:1031.00px;height:25.92px"></div>
<div class="cl" style="top:595.30px;left:1072.60px"><span class="c">font<span class="hy">-</span>weight</span><span class="w">:</span> <span class="k">bold</span><span class="w">;</span></div>
<div class="ln" style="top:621.22px;left:934.00px">22</div>
<div class="ib" style="top:620.82px;left:1031.00px;height:25.92px;background:rgba(255,255,64,0.07)"></div>
<div class="ig" style="top:620.82px;left:1031.00px;height:25.92px"></div>
<div class="cl" style="top:621.22px;left:1072.60px"><span class="c">margin</span><span class="w">:</span> <span class="n">0</span><span class="w">;</span></div>
<div class="ln act" style="top:647.14px;left:934.00px">23</div>
<div class="cl" style="top:647.14px;left:1031.00px"><span class="b1">}</span></div>
<div class="gl" style="left:179.2px;top:412.76px;width:156.0px;height:1.2px"></div>
<div class="gl" style="left:179.2px;top:413.46px;width:1.2px;height:25.92px"></div>
<div class="abs" style="left:220.8px;top:568.98px;width:1.5px;height:25.92px;background:#8b968d"></div>
<div class="abs" style="left:1353.5px;top:412.56px;width:125px;height:1.3px;background:rgba(218,112,214,.42)"></div>
<div class="gl" style="left:1031px;top:101.72px;width:166.4px;height:1.2px"></div>
<div class="gl" style="left:1031px;top:102.42px;width:1.2px;height:129.60px"></div>
<div class="gl" style="left:1031px;top:309.08px;width:114.4px;height:1.2px"></div>
<div class="gl" style="left:1031px;top:309.78px;width:1.2px;height:181.44px"></div>
<div class="gl" style="left:1031px;top:568.28px;width:156.0px;height:1.2px"></div>
<div class="gl" style="left:1031px;top:568.98px;width:1.2px;height:77.76px"></div>
<!-- overview ruler -->
<div class="abs" style="left:916.2px;top:77px;width:1.2px;height:692px;background:#3a3b35"></div>
<div class="abs" style="left:916.2px;top:76.6px;width:20.3px;height:1.2px;background:#3a3b35"></div>
<div class="abs" style="left:917.4px;top:399.8px;width:19px;height:2.6px;background:#c2c2b4"></div>
</div>
</body>
</html>
